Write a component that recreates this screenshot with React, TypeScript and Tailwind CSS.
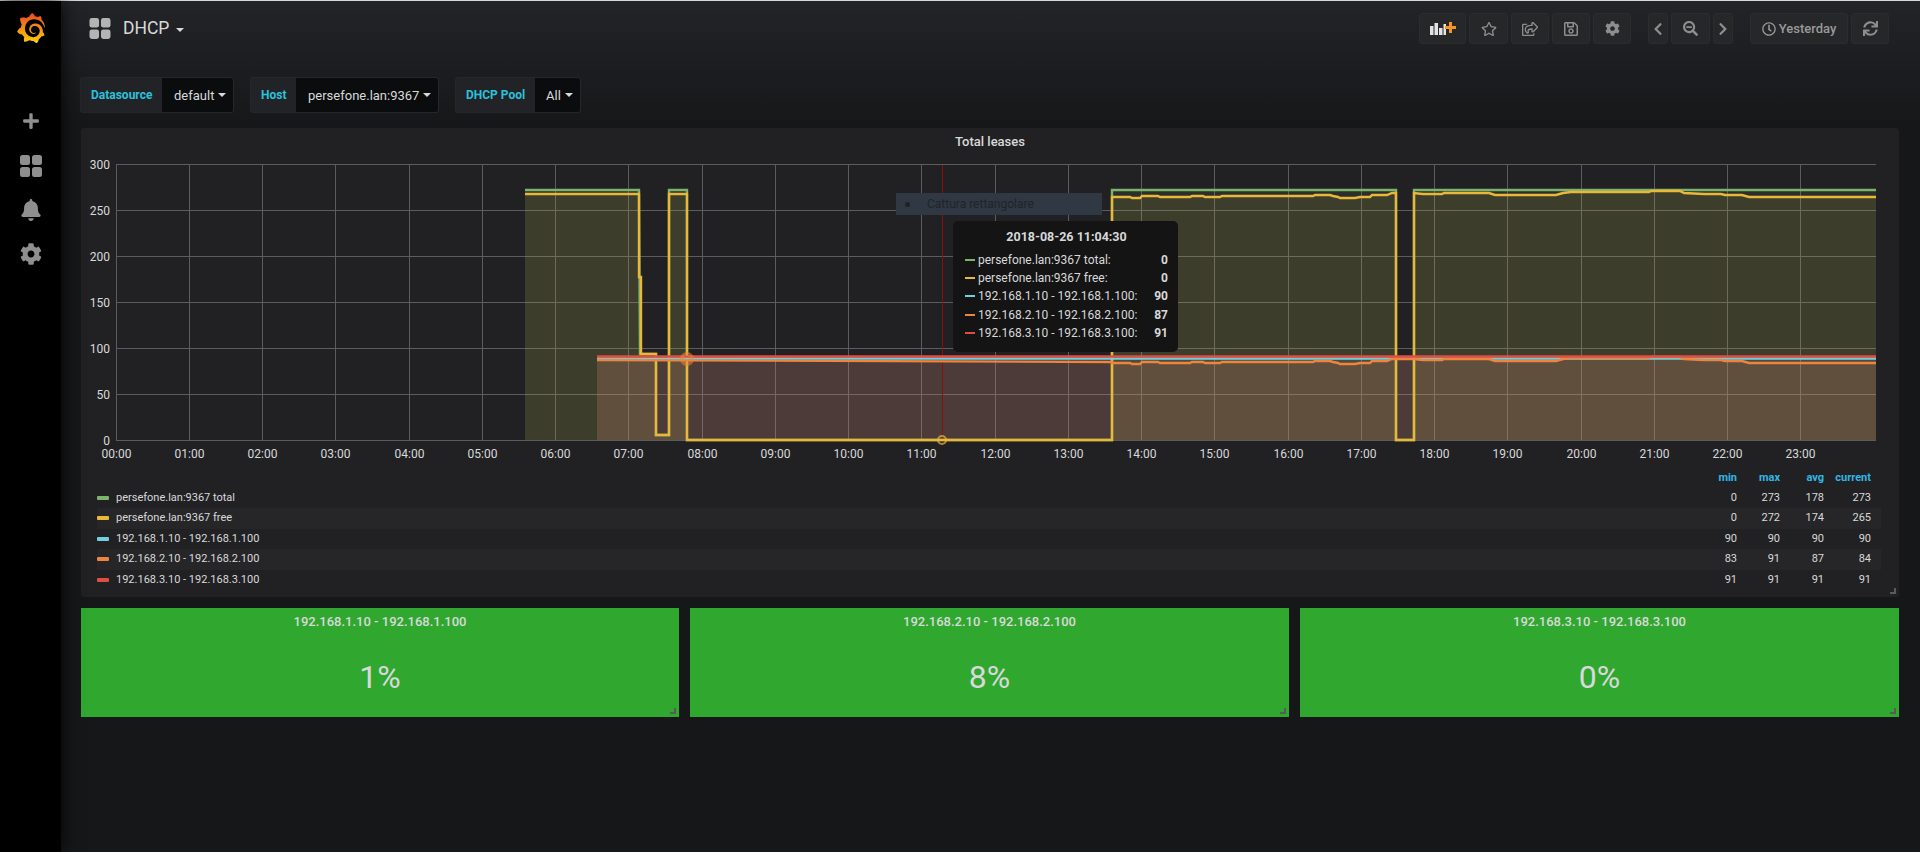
import { SiGrafana } from 'react-icons/si';
import {
  FaBell,
  FaChevronLeft,
  FaChevronRight,
  FaCog,
  FaPlus,
  FaRegClock,
  FaRegSave,
  FaRegShareSquare,
  FaRegStar,
  FaSearchMinus,
  FaSync,
} from 'react-icons/fa';

const GREEN = '#7EB26D';
const YELLOW = '#EAB839';
const BLUE = '#6ED0E0';
const ORANGE = '#EF843C';
const RED = '#E24D42';

const hourX = (h: number) => Math.floor(116.2 + 73.25 * h) + 0.5;
const yTicks = [300, 250, 200, 150, 100, 50, 0];
const tickY = (v: number) => 440.5 - (v / 50) * 46;

// the wobbling top of the free series between 13:35 and 17:30, then 17:45 onwards
const midShape: [number, number][] = [
  [1112, 197], [1130, 197], [1132, 198], [1140, 198], [1142, 196], [1158, 196], [1160, 197], [1190, 197],
  [1192, 196], [1203, 196], [1205, 197], [1220, 197], [1222, 196], [1313, 196], [1315, 195], [1330, 195],
  [1333, 196], [1338, 197], [1340, 198], [1355, 198], [1360, 197], [1370, 197], [1372, 195], [1387, 195],
  [1392, 193], [1396, 193],
];
const endShape: [number, number][] = [
  [1414, 193], [1423, 194], [1442, 194], [1444, 193], [1489, 193], [1495, 195], [1556, 195], [1563, 193],
  [1571, 192], [1649, 192], [1651, 191], [1680, 191], [1684, 193], [1704, 194], [1721, 194], [1725, 195],
  [1742, 195], [1749, 197], [1876, 197],
];

const total: [number, number][] = [
  [525, 190], [639, 190], [640, 354], [656, 354], [656, 435], [669, 435], [669, 190], [687, 190], [687, 440],
  [1112, 440], [1112, 190], [1396, 190], [1396, 440], [1414, 440], [1414, 190], [1876, 190],
];
const free: [number, number][] = [
  [525, 194], [639, 194], [639, 277], [641, 277], [641, 354], [656, 354], [656, 435], [669, 435], [669, 194],
  [687, 194], [687, 440], [1112, 440], ...midShape, [1396, 440], [1414, 440], ...endShape,
];
const pool1: [number, number][] = [[597, 358.5], [1876, 358.5]];
const pool3: [number, number][] = [[597, 356.5], [1876, 356.5]];
const pool2: [number, number][] = [
  [597, 360], [1112, 362],
  ...midShape.map(([x, y]): [number, number] => [x, y + 166]),
  ...endShape.map(([x, y]): [number, number] => [x, y + 166]),
];

const pts = (line: [number, number][]) => line.map(([x, y]) => `${x},${y}`).join(' ');
const area = (line: [number, number][]) =>
  `${line[0][0]},440 ${pts(line)} ${line[line.length - 1][0]},440`;

const series = [
  { line: total, color: GREEN },
  { line: free, color: YELLOW },
  { line: pool1, color: BLUE },
  { line: pool2, color: ORANGE },
  { line: pool3, color: RED },
];

const legend = [
  { name: 'persefone.lan:9367 total', color: GREEN, min: 0, max: 273, avg: 178, cur: 273 },
  { name: 'persefone.lan:9367 free', color: YELLOW, min: 0, max: 272, avg: 174, cur: 265 },
  { name: '192.168.1.10 - 192.168.1.100', color: BLUE, min: 90, max: 90, avg: 90, cur: 90 },
  { name: '192.168.2.10 - 192.168.2.100', color: ORANGE, min: 83, max: 91, avg: 87, cur: 84 },
  { name: '192.168.3.10 - 192.168.3.100', color: RED, min: 91, max: 91, avg: 91, cur: 91 },
];

const hover = [
  { name: 'persefone.lan:9367 total:', color: GREEN, value: 0 },
  { name: 'persefone.lan:9367 free:', color: YELLOW, value: 0 },
  { name: '192.168.1.10 - 192.168.1.100:', color: BLUE, value: 90 },
  { name: '192.168.2.10 - 192.168.2.100:', color: ORANGE, value: 87 },
  { name: '192.168.3.10 - 192.168.3.100:', color: RED, value: 91 },
];

const stats = [
  { title: '192.168.1.10 - 192.168.1.100', value: '1%' },
  { title: '192.168.2.10 - 192.168.2.100', value: '8%' },
  { title: '192.168.3.10 - 192.168.3.100', value: '0%' },
];

function GridIcon({ className }: { className: string }) {
  return (
    <svg viewBox="0 0 22 22" className={className} fill="currentColor">
      <rect x="0" y="0" width="10" height="10" rx="2.5" />
      <rect x="12" y="0" width="10" height="10" rx="2.5" />
      <rect x="0" y="12" width="10" height="10" rx="2.5" />
      <rect x="12" y="12" width="10" height="10" rx="2.5" />
    </svg>
  );
}

function AddPanelIcon() {
  return (
    <svg width="26" height="13" viewBox="0 0 26 13">
      <rect x="0" y="4" width="3.5" height="9" fill="#e3e3e3" />
      <rect x="4.5" y="1" width="3.5" height="12" fill="#e3e3e3" />
      <rect x="9" y="6" width="3.5" height="7" fill="#e3e3e3" />
      <rect x="13.5" y="2" width="2.5" height="11" fill="#e3e3e3" />
      <path d="M19 0h3v4h4v3h-4v4h-3V7h-4V4h4z" fill="#f79520" />
    </svg>
  );
}

function ToolButton({ children, className = 'w-[38px]' }: { children: React.ReactNode; className?: string }) {
  return (
    <button className={`h-[31px] flex items-center justify-center rounded-[3px] bg-[#262729] border border-[#2b2c2e] text-[#8e8e8e] ${className}`}>
      {children}
    </button>
  );
}

function Caret({ className = '' }: { className?: string }) {
  return <span className={`inline-block border-x-[4px] border-x-transparent border-t-[4px] border-t-[#d8d9da] ${className}`} />;
}

function Variable({ label, value, labelClass, valueClass }: { label: string; value: string; labelClass: string; valueClass: string }) {
  return (
    <div className="flex h-[36px] text-[13px] leading-none">
      <div className={`flex items-center rounded-l-[3px] bg-[#222327] border border-r-0 border-[#26272b] text-[12px] font-bold text-[#2cc0dc] ${labelClass}`}>
        {label}
      </div>
      <div className={`flex items-center gap-[4px] rounded-r-[3px] bg-[#0b0c0e] border border-l-0 border-[#26272b] text-[#d8d9da] ${valueClass}`}>
        {value}
        <Caret />
      </div>
    </div>
  );
}

function ResizeHandle() {
  return <span className="absolute right-[3px] bottom-[3px] w-[6px] h-[6px] border-r-2 border-b-2 border-[#5a5a5c]" />;
}

export default function App() {
  return (
    <div className="w-full h-[852px] overflow-hidden flex flex-col bg-[#161719] font-['Roboto',sans-serif] text-[#d8d9da]">
      <div className="h-px bg-[#d9d9d9]" />
      <div className="flex flex-1 min-h-0">
        <aside className="relative z-10 w-[61px] shrink-0 bg-black flex flex-col items-center text-[#8f8f8f] shadow-[0_0_18px_rgba(0,0,0,0.9)]">
          <svg width="0" height="0" className="absolute">
            <defs>
              <linearGradient id="logoFill" x1="0" y1="1" x2="0" y2="0">
                <stop offset="0" stopColor="#fcd00b" />
                <stop offset="1" stopColor="#f0491f" />
              </linearGradient>
            </defs>
          </svg>
          <SiGrafana size={30} className="mt-[12px] fill-[url(#logoFill)]" />
          <FaPlus size={18} className="mt-[69px]" />
          <GridIcon className="w-[22px] h-[22px] mt-[25px]" />
          <FaBell size={22} className="mt-[22px]" />
          <FaCog size={22} className="mt-[22px]" />
        </aside>

        <main className="flex-1 min-w-0 flex flex-col">
          <div className="h-[127px] pl-[20px] pr-[31px] bg-linear-to-b from-[#232427] to-[#161719]">
            <div className="flex items-center h-[31px] mt-[12px]">
              <GridIcon className="w-[22px] h-[21px] ml-[8px] text-[#b4b4b4]" />
              <span className="ml-[12px] text-[17.5px] text-[#d8d9da]">DHCP</span>
              <Caret className="ml-[7px] mt-[3px]" />
              <div className="ml-auto flex items-center gap-[3px]">
                <ToolButton className="w-[47px]"><AddPanelIcon /></ToolButton>
                <ToolButton className="w-[39px]"><FaRegStar size={16} /></ToolButton>
                <ToolButton><FaRegShareSquare size={16} /></ToolButton>
                <ToolButton><FaRegSave size={16} /></ToolButton>
                <ToolButton><FaCog size={15} /></ToolButton>
                <div className="w-[11px]" />
                <ToolButton className="w-[20px]"><FaChevronLeft size={14} /></ToolButton>
                <ToolButton className="w-[39px]"><FaSearchMinus size={15} /></ToolButton>
                <ToolButton className="w-[20px]"><FaChevronRight size={14} /></ToolButton>
                <div className="w-[11px]" />
                <ToolButton className="w-[98px] gap-[3px] text-[13px] font-medium text-[#9a9a9a]"><FaRegClock size={14} />Yesterday</ToolButton>
                <ToolButton><FaSync size={15} /></ToolButton>
              </div>
            </div>
            <div className="flex gap-[16px] mt-[33px] -ml-px">
              <Variable label="Datasource" value="default" labelClass="w-[82px] pl-[10px]" valueClass="w-[72px] pl-[12px]" />
              <Variable label="Host" value="persefone.lan:9367" labelClass="w-[46px] pl-[10px]" valueClass="w-[143px] pl-[12px]" />
              <Variable label="DHCP Pool" value="All" labelClass="w-[80px] pl-[10px]" valueClass="w-[46px] pl-[11px]" />
            </div>
          </div>

          <div className="pl-[20px] pr-[21px]">
            <section className="relative rounded-[3px] bg-[#212124] pb-[7px]">
              <h3 className="h-[28px] pt-[6px] text-center text-[13px] leading-[16px] font-medium text-[#d8d9da]">Total leases</h3>
              <svg viewBox="81 156 1818 310" className="block w-[1818px] h-[310px]">
                {yTicks.map((v) => (
                  <line key={v} x1="116" x2="1876" y1={tickY(v)} y2={tickY(v)} stroke="#5c5c5e" />
                ))}
                {Array.from({ length: 24 }, (_, h) => (
                  <line key={h} x1={hourX(h)} x2={hourX(h)} y1="165" y2="440" stroke="#5c5c5e" />
                ))}
                {series.map((s) => (
                  <polygon key={s.color} points={area(s.line)} fill={s.color} fillOpacity="0.1" />
                ))}
                <line x1="942.5" x2="942.5" y1="165" y2="440" stroke="#8a1010" />
                {series.map((s) => (
                  <polyline key={s.color} points={pts(s.line)} fill="none" stroke={s.color} strokeWidth="2.4" />
                ))}
                <circle cx="687" cy="359" r="5" fill="none" stroke={ORANGE} strokeOpacity="0.55" strokeWidth="4" />
                <circle cx="942" cy="440" r="4" fill="none" stroke={YELLOW} strokeOpacity="0.7" strokeWidth="2" />
                {yTicks.map((v) => (
                  <text key={v} x="110" y={tickY(v) + 4} textAnchor="end" fontSize="12" fill="#d8d9da">{v}</text>
                ))}
                {Array.from({ length: 24 }, (_, h) => (
                  <text key={h} x={hourX(h)} y="458" textAnchor="middle" fontSize="12" fill="#d8d9da">
                    {String(h).padStart(2, '0')}:00
                  </text>
                ))}
              </svg>

              <div className="absolute left-[815px] top-[65px] w-[206px] h-[22px] flex items-center bg-[#2f3843] text-[12px] text-[#1f242a]">
                <span className="ml-[9px] w-[5px] h-[5px] rounded-full bg-[#1e2227]" />
                <span className="ml-[17px]">Cattura rettangolare</span>
              </div>

              <div className="absolute left-[872px] top-[93px] w-[225px] h-[131px] rounded-[5px] bg-[#141414] pl-[12px] pr-[10px] text-[12px]">
                <div className="h-[30px] pt-[8px] text-center text-[12.5px] font-bold leading-[16px]">2018-08-26 11:04:30</div>
                {hover.map((r) => (
                  <div key={r.name} className="flex items-center h-[18.2px]">
                    <span className="w-[10px] h-[2px] mr-[3px]" style={{ backgroundColor: r.color }} />
                    <span>{r.name}</span>
                    <span className="ml-auto font-bold">{r.value}</span>
                  </div>
                ))}
              </div>

              <div className="flex justify-end h-[20.5px] mt-px pt-[2px] items-center pl-[16px] pr-[28px] text-[11px] font-bold text-[#33b5e5]">
                <span className="w-[43px] text-right">min</span>
                <span className="w-[43px] text-right">max</span>
                <span className="w-[44px] text-right">avg</span>
                <span className="w-[47px] text-right">current</span>
              </div>
              <div className="ml-[16px] mr-[18px] text-[11px]">
                {legend.map((row, i) => (
                  <div key={row.name} className={`flex items-center h-[20.5px] pr-[10px] ${i % 2 === 1 ? 'bg-[#262628]' : ''}`}>
                    <span className="w-[12px] h-[4px] rounded-[1px]" style={{ backgroundColor: row.color }} />
                    <span className="ml-[7px] flex-1">{row.name}</span>
                    <span className="w-[43px] text-right">{row.min}</span>
                    <span className="w-[43px] text-right">{row.max}</span>
                    <span className="w-[44px] text-right">{row.avg}</span>
                    <span className="w-[47px] text-right">{row.cur}</span>
                  </div>
                ))}
              </div>
              <ResizeHandle />
            </section>

            <div className="grid grid-cols-[598px_599px_599px] gap-[11px] mt-[11px]">
              {stats.map((s) => (
                <div key={s.title} className="relative h-[109px] bg-[#30a82f] flex flex-col items-center text-[#d8d9da]">
                  <div className="mt-[5px] text-[13px] leading-[18px] font-medium">{s.title}</div>
                  <div className="mt-[27px] text-[32px] leading-[38px]">{s.value}</div>
                  <ResizeHandle />
                </div>
              ))}
            </div>
          </div>
        </main>
      </div>
    </div>
  );
}
